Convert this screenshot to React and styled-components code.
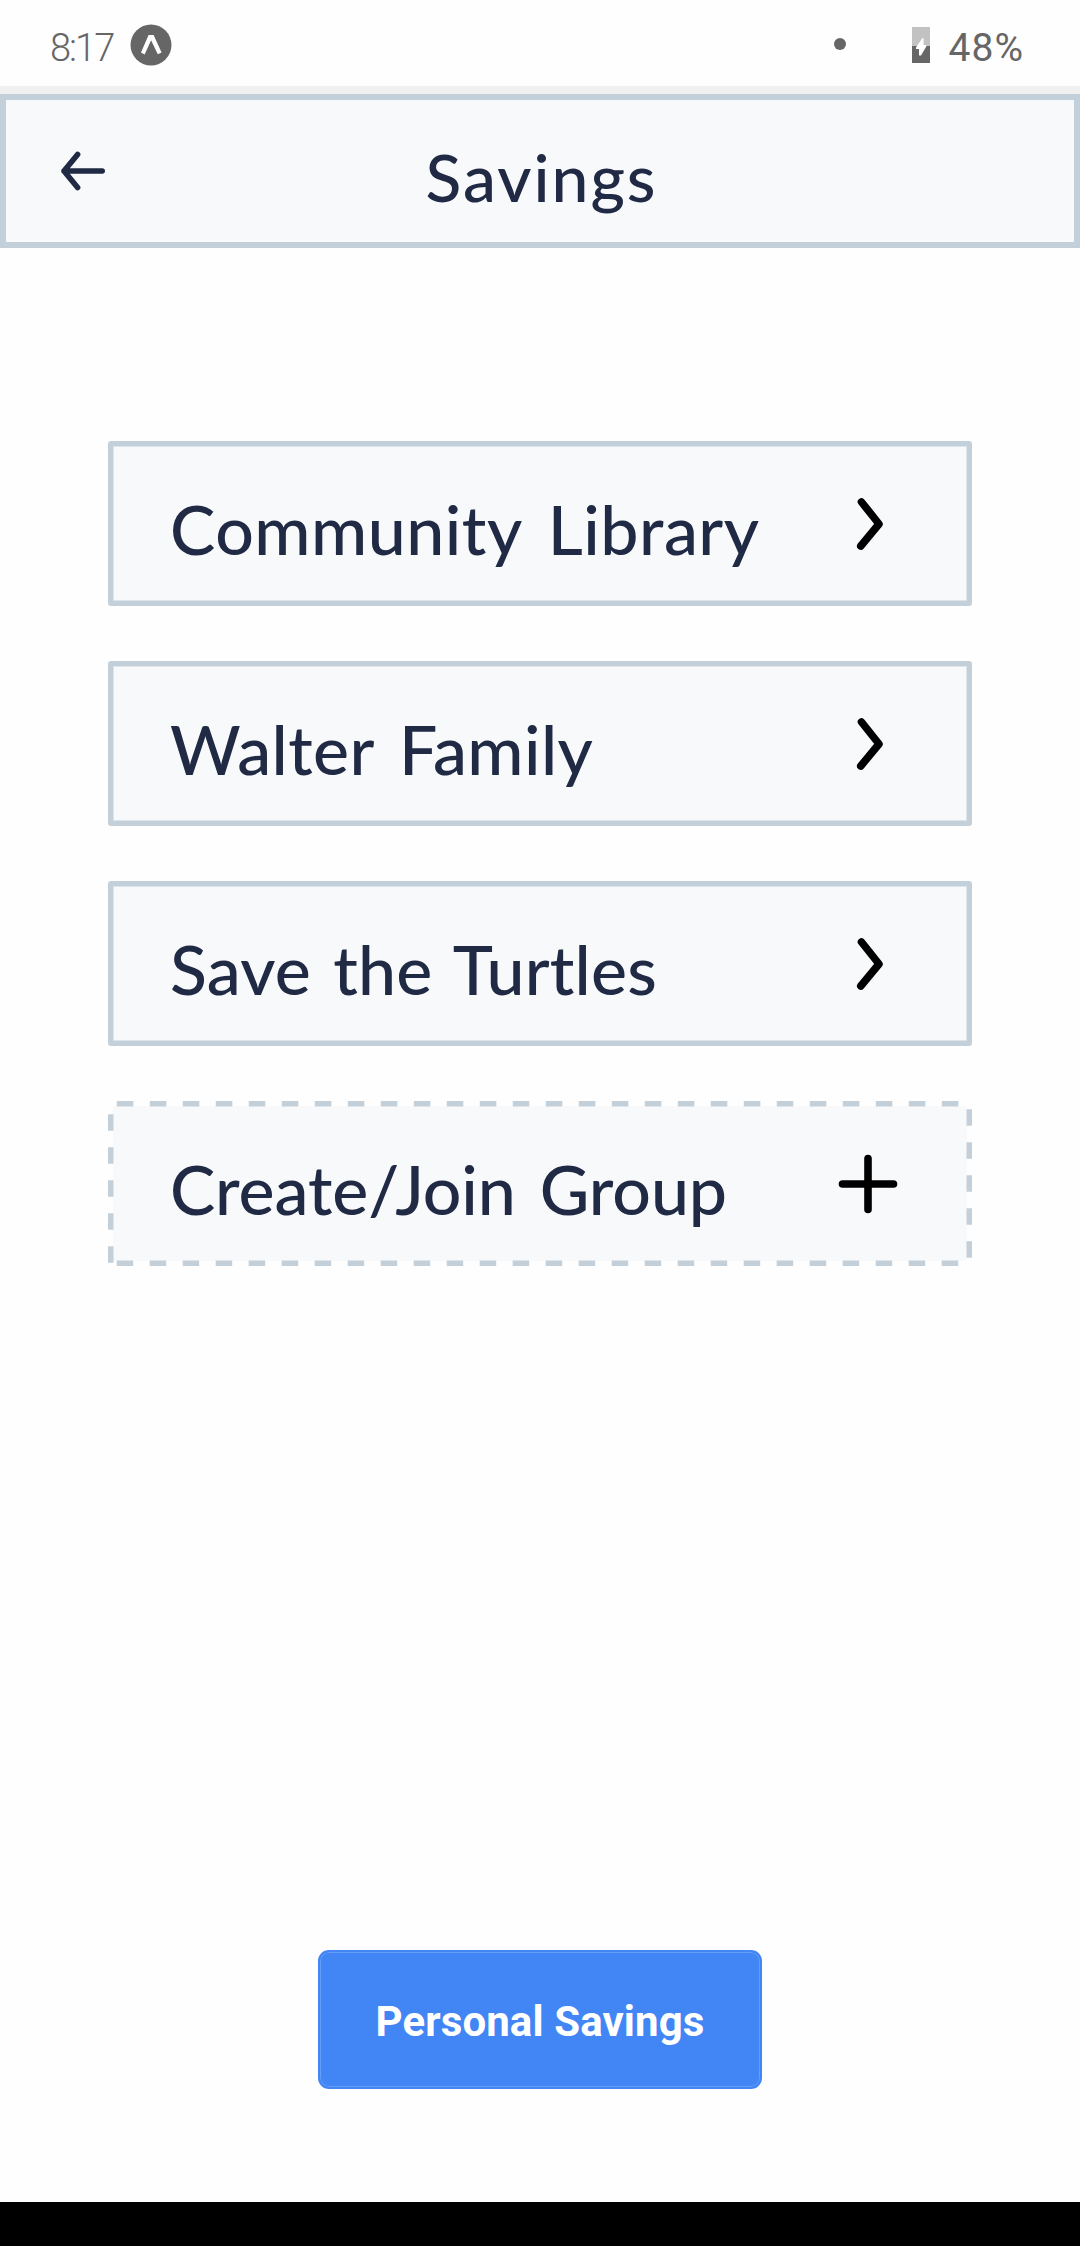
import React from "react";
import styled, { createGlobalStyle } from "styled-components";

const GlobalStyle = createGlobalStyle`
  * {
    box-sizing: border-box;
  }

  body {
    margin: 0;
    background: #fefefe;
  }
`;

const Screen = styled.div`
  display: flex;
  flex-direction: column;
  width: 1080px;
  height: 2246px;
  background: #fefefe;
`;

const StatusBar = styled.div`
  display: flex;
  align-items: center;
  justify-content: space-between;
  height: 94px;
  padding: 4px 56px 0 50px;
  border-bottom: 8px solid #f0f0f0;
  color: #666;
`;

const StatusGroup = styled.div`
  display: flex;
  align-items: center;
`;

const StatusText = styled.span`
  font-family: Roboto, sans-serif;
  font-size: ${({ $size }) => $size}px;
  font-weight: ${({ $weight }) => $weight};
  line-height: 44px;
  letter-spacing: ${({ $spacing }) => $spacing}px;
  padding-top: 5px;
`;

const AppBadge = styled.svg`
  margin-left: 17px;
`;

const Dot = styled.span`
  width: 12px;
  height: 12px;
  margin: -2px 66px 0 0;
  border-radius: 50%;
  background: #666;
`;

const Battery = styled.svg`
  margin-right: 19px;
`;

const Header = styled.header`
  display: grid;
  grid-template-columns: 120px 1fr 120px;
  align-items: center;
  height: 154px;
  border: 6px solid #c3cfd9;
  background: #f8f9fb;
`;

const BackButton = styled.button`
  display: flex;
  padding: 0 0 0 52px;
  border: 0;
  background: none;
`;

const Title = styled.h1`
  margin: 0;
  padding: 12px 0 0 3px;
  color: #202a44;
  font-family: Lato, sans-serif;
  font-size: 66px;
  font-weight: 500;
  line-height: 80px;
  letter-spacing: 2px;
  text-align: center;
`;

const GroupList = styled.main`
  display: flex;
  flex: 1;
  flex-direction: column;
  gap: 55px;
  padding: 193px 108px 0;
`;

const GroupRow = styled.div`
  position: relative;
  display: flex;
  align-items: center;
  justify-content: space-between;
  height: 165px;
  padding: 0 69px 0 57px;
  border: 5px solid #c3cfd9;
  border-radius: 3px;
  background: #f8f9fb;
  box-shadow: inset 0 0 0 1px #dde4ea;
`;

const CreateRow = styled(GroupRow)`
  border-color: transparent;
  background-clip: padding-box;
  box-shadow: none;
`;

const GroupName = styled.span`
  padding-top: 10px;
  color: #202a44;
  font-family: Lato, sans-serif;
  font-size: 68px;
  font-weight: 500;
  line-height: 80px;
  letter-spacing: ${({ $spacing }) => $spacing}px;
  word-spacing: ${({ $wordGap }) => $wordGap}px;
  white-space: nowrap;
`;

const DashedOutline = styled.svg`
  position: absolute;
  top: -5px;
  left: -5px;
`;

const Footer = styled.footer`
  display: flex;
  justify-content: center;
  padding-bottom: 113px;
`;

const PersonalButton = styled.button`
  width: 444px;
  height: 139px;
  padding: 3px 0 0;
  border: 2px solid #4285f4;
  border-radius: 11px;
  background: #4285f4;
  box-shadow: inset 0 0 0 1px #669df6;
  color: #fff;
  font-family: Roboto, sans-serif;
  font-size: 42px;
  font-weight: 700;
  letter-spacing: 0.1px;
`;

const NavBar = styled.div`
  height: 44px;
  background: #000;
`;

const groups = [
  { name: "Community Library", spacing: 0.5, wordGap: 9 },
  { name: "Walter Family", spacing: 0.4, wordGap: 8 },
  { name: "Save the Turtles", spacing: 0.2, wordGap: 5 },
];

const Chevron = () => (
  <svg width="60" height="60" viewBox="0 0 60 60" fill="none">
    <path
      d="M23.5 8 L41 30 L22.8 52"
      stroke="#000"
      strokeWidth="7.6"
      strokeLinecap="round"
      strokeLinejoin="round"
    />
  </svg>
);

const Plus = () => (
  <svg width="60" height="60" viewBox="0 0 60 60" fill="none">
    <path
      d="M4.5 30 H55.5 M30 4.5 V55.5"
      stroke="#000"
      strokeWidth="7.6"
      strokeLinecap="round"
    />
  </svg>
);

const App = () => {
  return (
    <>
      <GlobalStyle />
      <Screen>
        <StatusBar>
          <StatusGroup>
            <StatusText $size={38} $weight={300} $spacing={-2}>8:17</StatusText>
            <AppBadge width="42" height="42" viewBox="0 0 42 42">
              <circle cx="21" cy="21" r="20.5" fill="#666" />
              <path
                d="M18.6 11 H23.6 L31.6 28.4 L27.8 30.2 L21.1 16.2 L14.6 30.4 L11 28.6 Z"
                fill="#fff"
              />
            </AppBadge>
          </StatusGroup>
          <StatusGroup>
            <Dot />
            <Battery width="18" height="36" viewBox="0 0 18 36">
              <path d="M0 0H18V19H0Z" fill="#c2c2c2" />
              <path d="M0 19H18V36H0Z" fill="#666" />
              <path d="M10.5 11 L4 20.5 V22 H7 V28.5 H9 L14.3 19.5 V18 H11.5 V11 Z" fill="#fff" />
            </Battery>
            <StatusText $size={39} $weight={400} $spacing={1}>48%</StatusText>
          </StatusGroup>
        </StatusBar>

        <Header>
          <BackButton aria-label="Back">
            <svg width="50" height="44" viewBox="0 0 50 44" fill="none">
              <path
                d="M19.6 5.5 L6 22 L19.6 38.5 M6 22 H44.2"
                stroke="#202a44"
                strokeWidth="5.6"
                strokeLinecap="round"
                strokeLinejoin="round"
              />
            </svg>
          </BackButton>
          <Title>Savings</Title>
        </Header>

        <GroupList>
          {groups.map(({ name, spacing, wordGap }) => (
            <GroupRow key={name}>
              <GroupName $spacing={spacing} $wordGap={wordGap}>{name}</GroupName>
              <Chevron />
            </GroupRow>
          ))}
          <CreateRow>
            <DashedOutline width="864" height="165" viewBox="0 0 864 165" fill="none">
              <path
                d="M2.75 161.7 V2.75 H861.25 V162.25 H2.75"
                stroke="#c3cfd9"
                strokeWidth="5.5"
                strokeDasharray="16.5 16.5"
              />
            </DashedOutline>
            <GroupName $spacing={-0.1} $wordGap={7}>Create/Join Group</GroupName>
            <Plus />
          </CreateRow>
        </GroupList>

        <Footer>
          <PersonalButton>Personal Savings</PersonalButton>
        </Footer>
        <NavBar />
      </Screen>
    </>
  );
};

export default App;
